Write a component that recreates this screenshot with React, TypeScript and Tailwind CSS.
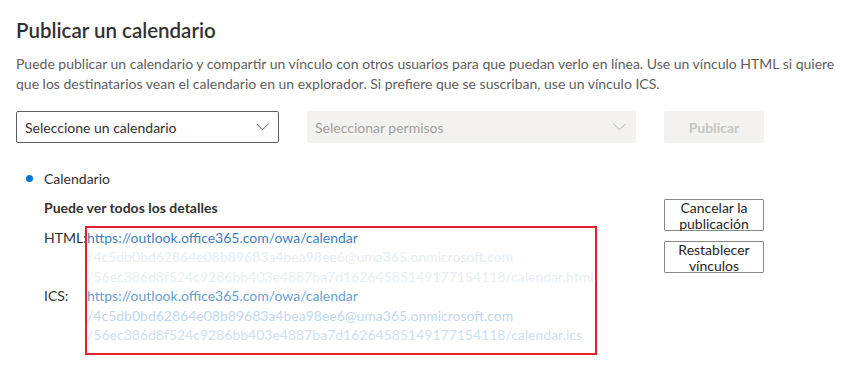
import React from 'react';

const Chevron: React.FC<{ color: string }> = ({ color }) => (
  <svg width="13" height="8" viewBox="0 0 13 8" fill="none">
    <polyline points="0.5,0.8 6.5,6.8 12.5,0.8" stroke={color} strokeWidth="1" />
  </svg>
);

const App: React.FC = () => {
  return (
    <div className="w-[847px] h-[380px] bg-white px-4 font-['Lato','Liberation_Sans',sans-serif] text-[14px] text-[#323130] overflow-hidden">
      <h1 className="pt-[18px] text-[20.5px] leading-6 font-semibold text-[#323130]">Publicar un calendario</h1>

      <p className="mt-[12px] leading-5 text-[#605e5c] whitespace-nowrap">
        Puede publicar un calendario y compartir un vínculo con otros usuarios para que puedan verlo en línea. Use un vínculo HTML si quiere
        <br />
        que los destinatarios vean el calendario en un explorador. Si prefiere que se suscriban, use un vínculo ICS.
      </p>

      {/* selectors */}
      <div className="mt-[17px] flex items-center">
        <div className="w-[263px] h-8 border border-[#605e5c] rounded-[2px] flex items-center justify-between pl-2 pr-[9px]">
          <span className="text-[#323130]">Seleccione un calendario</span>
          <Chevron color="#605e5c" />
        </div>
        <div className="ml-[28px] w-[329px] h-8 bg-[#f3f2f1] rounded-[2px] flex items-center justify-between pl-2 pr-[10px]">
          <span className="text-[#a19f9d]">Seleccionar permisos</span>
          <Chevron color="#b3b0ad" />
        </div>
        <button className="ml-[28px] w-[100px] h-8 bg-[#f3f2f1] rounded-[2px] font-bold text-[#c8c6c4]">
          Publicar
        </button>
      </div>

      {/* published calendar */}
      <div className="mt-[25px] flex">
        <div className="w-[648px]">
          <div className="flex items-center h-5 pl-[10px]">
            <span className="w-[7px] h-[7px] rounded-full bg-[#0078d4]" />
            <span className="ml-[11px]">Calendario</span>
          </div>

          <div className="pl-7 mt-[10px] leading-5 font-bold">Puede ver todos los detalles</div>

          <div className="pl-7 mt-[8px] flex">
            <div className="w-[41px] pt-[2px] leading-[19.4px] text-[#323130]">
              <div className="h-[58px]">HTML:</div>
              <div>ICS:</div>
            </div>
            <div className="w-[512px] h-[129px] border-2 border-[#e5202e] leading-[19.4px] whitespace-nowrap overflow-hidden">
              <div className="text-[#3f7fbd]">https://outlook.office365.com/owa/calendar</div>
              <div className="text-[#e5edf6]">/4c5db0bd62864e08b89683a4bea98ee6@uma365.onmicrosoft.com</div>
              <div className="text-[#e7eef6]">/56ec386d8f524c9286bb403e4887ba7d16264585149177154118/calendar.html</div>
              <div className="text-[#6a9fd0]">https://outlook.office365.com/owa/calendar</div>
              <div className="text-[#c2d7ec]">/4c5db0bd62864e08b89683a4bea98ee6@uma365.onmicrosoft.com</div>
              <div className="text-[#cfdfef]">/56ec386d8f524c9286bb403e4887ba7d16264585149177154118/calendar.ics</div>
            </div>
          </div>
        </div>

        <div className="mt-[31px] flex flex-col gap-[10px]">
          <button className="w-[100px] h-8 border border-[#8a8886] rounded-[1px] leading-[16px] text-[#252423]">
            Cancelar la
            <br />
            publicación
          </button>
          <button className="w-[100px] h-8 border border-[#8a8886] rounded-[1px] leading-[16px] text-[#252423]">
            Restablecer
            <br />
            vínculos
          </button>
        </div>
      </div>
    </div>
  );
};

export default App;
